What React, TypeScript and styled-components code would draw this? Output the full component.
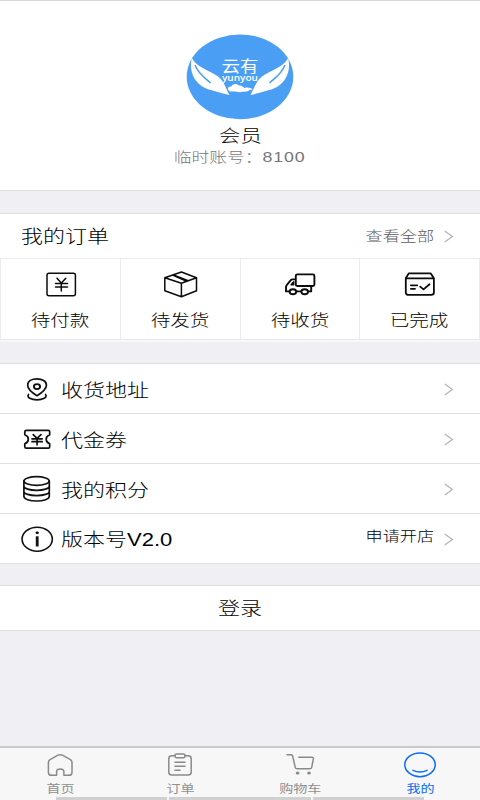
import React from 'react';
import styled, { createGlobalStyle } from 'styled-components';

const Global = createGlobalStyle`
  * { box-sizing: border-box; }
  body {
    margin: 0;
    background: #efeff4;
    font-family: "Noto Sans CJK SC", sans-serif;
    font-weight: 300;
    color: #000;
  }
`;

const Page = styled.div`
  width: 480px;
  height: 800px;
  display: flex;
  flex-direction: column;
  overflow: hidden;
  background: #efeff4;
`;

/* Wide lettering: the glyphs are set at their height and stretched sideways. */
const Label = styled.span<{ $size: number; $color?: string; $from?: string; $stretch?: number; $weight?: number }>`
  display: block;
  white-space: nowrap;
  font-size: ${p => p.$size}px;
  font-weight: ${p => p.$weight ?? 300};
  line-height: 22px;
  color: ${p => p.$color ?? '#000'};
  transform: scaleX(${p => p.$stretch ?? 1.222});
  transform-origin: ${p => p.$from ?? 'center'} center;
`;

const Latin = styled.span<{ $spacing?: number }>`
  font-family: "Liberation Sans", sans-serif;
  font-weight: 400;
  letter-spacing: ${p => p.$spacing ?? 0}px;
`;

const Profile = styled.header`
  height: 191px;
  padding-top: 33px;
  display: flex;
  flex-direction: column;
  align-items: center;
  background: #fff;
  border-top: 1px solid #d8d8d8;
  border-bottom: 1px solid #e2e2e5;
`;

const Name = styled.div`
  height: 21px;
  margin-top: 3px;
`;

const Section = styled.section<{ $gap: number }>`
  margin-top: ${p => p.$gap}px;
  background: #fff;
  border-top: 1px solid #dedee2;
`;

const TitleRow = styled.div`
  height: 44px;
  padding: 0 26px 0 21px;
  display: flex;
  align-items: center;
  justify-content: space-between;
  & span { margin-bottom: 3px; }
`;

const More = styled.div`
  display: flex;
  align-items: center;
  gap: 10px;
`;

const Grid = styled.div`
  display: grid;
  grid-template-columns: 120px 120px 119px 120px;
  gap: 0;
  height: 84px;
  border: 1px solid #ededee;
  border-bottom: 2px solid #f8f8fa;
`;

const Cell = styled.div`
  display: flex;
  flex-direction: column;
  align-items: center;
  padding-top: 12px;
  border-right: 1px solid #ebebec;
  border-bottom: 1px solid #e8e8ea;
  & > span { margin-top: 9px; }
`;

const Row = styled.div`
  height: 50px;
  padding: 0 26px 0 20px;
  display: flex;
  align-items: center;
  border-bottom: 1px solid #dfdfe1;
`;

const RowIcon = styled.div`
  width: 41px;
  height: 30px;
`;

const RowEnd = styled(More)`
  margin-left: auto;
  & > span { margin-bottom: 7px; }
`;

const Login = styled.button`
  display: flex;
  justify-content: center;
  align-items: center;
  width: 100%;
  height: 45px;
  padding: 0 0 2px;
  font: inherit;
  background: #fff;
  border: 0;
  border-bottom: 1px solid #dfdfe3;
`;

const TabBar = styled.nav`
  margin-top: auto;
  height: 54px;
  display: flex;
  flex-direction: column;
  background: #f7f7f7;
  border-top: 2px solid #c9c9cc;
`;

const Tabs = styled.div`
  height: 49px;
  display: grid;
  grid-template-columns: repeat(4, 120px);
`;

const Tab = styled.div`
  display: flex;
  flex-direction: column;
  align-items: center;
  padding-top: 3px;
  & > span { margin-top: -2px; }
`;

const Strips = styled.div`
  display: flex;
  gap: 2px;
  padding-left: 56px;
`;

const Strip = styled.i<{ $w: number }>`
  width: ${p => p.$w}px;
  height: 3px;
  background: #d0d0d0;
`;

const Arrow = () => (
  <svg width="10" height="14" viewBox="0 0 10 14" fill="none" stroke="#b2b2b5" strokeWidth="1.2">
    <path d="M0.8 2L8.4 7.5L0.8 13" />
  </svg>
);

const Logo = () => (
  <svg width="108" height="87" viewBox="0 0 108 87">
    <ellipse cx="54" cy="42.8" rx="53.3" ry="42.4" fill="#4a9ff5" />
    <g fill="#fff">
      <path d="M5.8 24C3.500 34 6 43 12 49C17 54.500 23 55.500 30 57.500C35 59 39 60 43.500 61C39.500 54 38 47 32 42.500C23 36 11.500 34 5.800 24Z" />
      <path d="M102.200 24C104.500 34 102 43 96 49C91 54.500 85 55.500 78 57.500C73 59 69 60 64.500 61C68.500 54 70 47 76 42.500C85 36 96.500 34 102.200 24Z" />
      <path d="M42.500 56C41 53.500 43 52.300 45.500 52.500C46 49.500 51 49 53 51.500C55.500 51 57 53 58.500 54C62 53 65 54 67 55.500C63 55.500 61 58.500 57 57.700C52 59 50 57 47.500 57.500C45 57.700 43 57.500 42.500 56Z" />
      <text x="54" y="37.8" textAnchor="middle" textLength="37" lengthAdjust="spacingAndGlyphs" fontFamily="Noto Sans CJK SC, sans-serif" fontWeight="400" fontSize="15.5">云有</text>
      <text x="54" y="46.6" textAnchor="middle" textLength="36" lengthAdjust="spacingAndGlyphs" fontFamily="Open Sans, sans-serif" fontWeight="600" fontSize="8">yunyou</text>
    </g>
    <g fill="none" stroke="#4a9ff5" strokeWidth="1.5">
      <path d="M9 31C12.5 40 18 43 24.5 49" />
      <path d="M99 31C95.5 40 90 43 83.5 49" />
    </g>
  </svg>
);

const OrderSvg = ({ children }: { children: React.ReactNode }) => (
  <svg width="36" height="28" viewBox="0 0 36 28" fill="none" stroke="#0c0c0c" strokeWidth="1.5" strokeLinejoin="round" strokeLinecap="round">
    {children}
  </svg>
);

const PayIcon = () => (
  <OrderSvg>
    <rect x="4" y="2.3" width="28.4" height="22.4" rx="2" />
    <path d="M14 7.3L18.3 12.1L22.8 7.3M18.3 12.1V20M12.5 12.5H24.5M12.5 16.1H24.5" />
  </OrderSvg>
);

const BoxIcon = () => (
  <OrderSvg>
    <path d="M18.4 1L33.5 6.8V19.7L18.4 25.7L1.8 19.7V6.8ZM1.8 6.8L18.4 12.2L33.5 6.8M18.4 12.2V25.7M9.6 4.1L22.6 9.8M10.5 3.9L25.2 9.6" />
  </OrderSvg>
);

const TruckIcon = () => (
  <OrderSvg>
    <g strokeWidth="1.9">
      <rect x="13.8" y="3.4" width="18.6" height="11.6" rx="1.5" />
      <path d="M13 8.4H10.6Q9.3 8.4 8.6 9.4L5.100 13.600Q4 14.800 4 16V20.400H7.200M14.800 20.400H19M26.400 20.400H29.200V15.600" />
      <path d="M11.700 10.800V13.700H9.100L10.900 11.500" strokeWidth="1.400" />
      <ellipse cx="10.900" cy="20.700" rx="3.300" ry="2.500" />
      <ellipse cx="22.700" cy="20.700" rx="3.300" ry="2.500" />
    </g>
  </OrderSvg>
);

const DoneIcon = () => (
  <OrderSvg>
    <g strokeWidth="1.8">
      <path d="M3.8 7.3L6.7 2.4H28.8L31.9 7.3V21.6C31.9 23 30.8 23.9 29.3 23.9H6.5C4.8 23.9 3.8 23 3.8 21.6ZM4 7.3H31.8" />
      <path d="M8.9 14.3H15.2M8.9 17.8H13M18.2 15.6L21.5 18.4L27.5 13.3" />
    </g>
  </OrderSvg>
);

const RowSvg = ({ children }: { children: React.ReactNode }) => (
  <svg width="34" height="30" viewBox="0 0 34 30" fill="none" stroke="#111" strokeWidth="1.7" strokeLinejoin="round" strokeLinecap="round">
    {children}
  </svg>
);

const PinIcon = () => (
  <RowSvg>
    <path d="M17 21.7C10.5 17.7 7.7 15 7.7 11.2C7.7 7.2 11.8 4.9 17 4.9S26.4 7.2 26.4 11.2C26.4 15 23.5 17.7 17 21.7Z" />
    <ellipse cx="17" cy="12.6" rx="3.1" ry="2.5" strokeWidth="1.9" />
    <path d="M8.5 20.5C6.5 23.5 11.2 25.9 17 25.9S27.5 23.5 25.6 20.5" />
  </RowSvg>
);

const CouponIcon = () => (
  <RowSvg>
    <path d="M6.3 6.3H28.3Q29.7 6.3 29.7 7.7V10.7C25 12.5 25 17.8 29.7 19.7V22.8Q29.7 24.2 28.3 24.2H6.3Q4.8 24.2 4.8 22.8V19.7C9.5 17.8 9.5 12.5 4.8 10.7V7.7Q4.8 6.3 6.3 6.3Z" />
    <path d="M13.2 10.7L17.1 14.4L21 10.7M17.1 14.4V20.7M12 14.8H22.2M12 17.7H22.2" />
  </RowSvg>
);

const PointsIcon = () => (
  <RowSvg>
    <ellipse cx="16.6" cy="7" rx="12.7" ry="4.3" />
    <path d="M3.9 7V22.3C3.9 25.1 9.5 27 16.6 27S29.3 25.1 29.3 22.3V7M3.9 12.2C3.9 14.5 9.5 16.3 16.6 16.3S29.3 14.5 29.3 12.2M3.9 17.4C3.9 19.8 9.5 21.6 16.6 21.6S29.3 19.8 29.3 17.4" />
  </RowSvg>
);

const InfoIcon = () => (
  <RowSvg>
    <ellipse cx="17.2" cy="15.2" rx="15.1" ry="12" strokeWidth="1.6" />
    <path d="M17.2 12.3V22.5" strokeWidth="2.8" strokeLinecap="butt" />
    <ellipse cx="17.2" cy="8.8" rx="1.7" ry="1.4" fill="#111" stroke="none" />
  </RowSvg>
);

const TabSvg = ({ color = '#8a8a8a', children }: { color?: string; children: React.ReactNode }) => (
  <svg width="34" height="28" viewBox="0 0 34 28" fill="none" stroke={color} strokeWidth="1.5" strokeLinejoin="round" strokeLinecap="round">
    {children}
  </svg>
);

const HomeIcon = () => (
  <TabSvg>
    <path d="M13.6 24.3H8.6Q5.4 24.3 5.4 21.4V11.4Q5.4 9.8 7 8.6L15 4.2Q17.2 3.1 19.4 4.2L27.4 8.6Q29 9.8 29 11.4V21.4Q29 24.3 25.8 24.3H20.9V20.8Q20.9 18 17.2 18T13.6 20.8Z" />
  </TabSvg>
);

const ListIcon = () => (
  <TabSvg>
    <path d="M12 4.8H9Q5.8 4.8 5.8 7.4V21.3Q5.8 24.1 9 24.1H25Q28.2 24.1 28.2 21.3V7.4Q28.2 4.8 25 4.8H22" />
    <rect x="12" y="3" width="10" height="3.7" rx="1.4" />
    <path d="M12 11.2H22M12 15.3H22M12 19.3H17" />
  </TabSvg>
);

const CartIcon = () => (
  <TabSvg>
    <path d="M4 3.8H8.3Q9.4 3.8 9.6 4.8L12.2 16.3Q12.5 17.8 14.2 17.8H26.7Q28.4 17.8 28.7 16.3L30.4 7.8Q30.7 6.3 29 6.3H15.8" />
    <ellipse cx="14.6" cy="22" rx="1.9" ry="1.6" fill="#8a8a8a" stroke="none" />
    <ellipse cx="26" cy="22" rx="1.9" ry="1.6" fill="#8a8a8a" stroke="none" />
  </TabSvg>
);

const MeIcon = () => (
  <TabSvg color="#0b6cf5">
    <ellipse cx="17" cy="13.8" rx="15.2" ry="11.9" />
    <path d="M10 19.3Q17 22.8 24 19.3" />
  </TabSvg>
);

const orders = [
  { text: '待付款', icon: <PayIcon /> },
  { text: '待发货', icon: <BoxIcon /> },
  { text: '待收货', icon: <TruckIcon /> },
  { text: '已完成', icon: <DoneIcon /> },
];

const rows = [
  { text: '收货地址', icon: <PinIcon /> },
  { text: '代金券', icon: <CouponIcon /> },
  { text: '我的积分', icon: <PointsIcon /> },
  { text: '版本号', latin: 'V2.0', icon: <InfoIcon />, end: '申请开店' },
];

const tabs = [
  { text: '首页', icon: <HomeIcon /> },
  { text: '订单', icon: <ListIcon /> },
  { text: '购物车', icon: <CartIcon /> },
  { text: '我的', icon: <MeIcon />, active: true },
];

export default function App() {
  return (
    <>
      <Global />
      <Page>
        <Profile>
          <Logo />
          <Name><Label $size={17.5}>会员</Label></Name>
          <Label $size={14.2} $color="#77777b" $stretch={1.25}>临时账号：<Latin $spacing={0.7}>8100</Latin></Label>
        </Profile>

        <Section $gap={22}>
          <TitleRow>
            <Label $size={18} $from="left">我的订单</Label>
            <More>
              <Label $size={14} $color="#5c5c5f" $from="right">查看全部</Label>
              <Arrow />
            </More>
          </TitleRow>
          <Grid>
            {orders.map(o => (
              <Cell key={o.text}>
                {o.icon}
                <Label $size={16}>{o.text}</Label>
              </Cell>
            ))}
          </Grid>
        </Section>

        <Section $gap={21}>
          {rows.map(r => (
            <Row key={r.text}>
              <RowIcon>{r.icon}</RowIcon>
              <Label $size={18} $from="left">
                {r.text}
                {r.latin && <Latin>{r.latin}</Latin>}
              </Label>
              <RowEnd>
                {r.end && <Label $size={14} $from="right">{r.end}</Label>}
                <Arrow />
              </RowEnd>
            </Row>
          ))}
        </Section>

        <Section $gap={21}>
          <Login><Label $size={18}>登录</Label></Login>
        </Section>

        <TabBar>
          <Tabs>
            {tabs.map(t => (
              <Tab key={t.text}>
                {t.icon}
                <Label $size={11.5} $weight={400} $color={t.active ? '#0b6cf5' : '#8f8f8f'}>{t.text}</Label>
              </Tab>
            ))}
          </Tabs>
          <Strips>
            <Strip $w={111} />
            <Strip $w={142} />
            <Strip $w={111} />
          </Strips>
        </TabBar>
      </Page>
    </>
  );
}
